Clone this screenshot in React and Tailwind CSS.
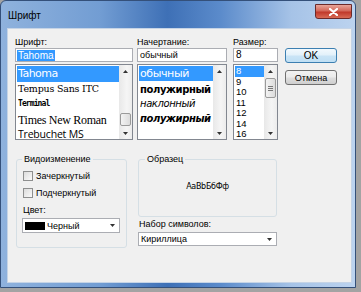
import React from "react";

const ui = "font-['Liberation_Sans',Arial,sans-serif] text-[9px] leading-[12px] text-black";

const Arrow = ({ down }) => (
  <svg width="5" height="3" viewBox="0 0 5 3" className="block">
    {down ? <path d="M0 0h5L2.5 3z" fill="#333" /> : <path d="M0 3h5L2.5 0z" fill="#333" />}
  </svg>
);

// vertical scrollbar; thumb placement comes in as full class strings
const ScrollBar = ({ thumb, grip }) => (
  <div className="flex w-[13px] shrink-0 flex-col items-center bg-[linear-gradient(90deg,#e8e8e8,#f5f5f5_60%,#ececec)]">
    <div className="flex h-[12px] items-center justify-center">
      <Arrow />
    </div>
    {thumb && (
      <div
        className={`${thumb} flex w-[11px] flex-col items-center justify-center gap-[1px] rounded-[2px] border border-[#9a9a9a] bg-[linear-gradient(90deg,#f3f3f3,#dcdcdc)]`}
      >
        {grip && (
          <>
            <div className="h-px w-[5px] bg-[#777]" />
            <div className="h-px w-[5px] bg-[#777]" />
            <div className="h-px w-[5px] bg-[#777]" />
          </>
        )}
      </div>
    )}
    <div className="mt-auto flex h-[12px] items-center justify-center">
      <Arrow down />
    </div>
  </div>
);

const Check = ({ label }) => (
  <div className="flex h-[12px] items-center gap-[3px]">
    <div className="h-[10px] w-[10px] border border-[#8e8f8f] bg-[linear-gradient(135deg,#dcdcdc,#fafafa)]" />
    <span>{label}</span>
  </div>
);

const fontItems = [
  { name: "Tempus Sans ITC", cls: "h-[14px] font-['DejaVu_Serif',serif] text-[9.5px] tracking-[-0.2px]" },
  { name: "Terminal", cls: "h-[15px] font-['DejaVu_Sans_Mono',monospace] text-[8px] font-bold tracking-[-0.9px]" },
  { name: "Times New Roman", cls: "h-[17px] font-['Liberation_Serif',serif] text-[12px] tracking-[-0.3px]" },
  { name: "Trebuchet MS", cls: "h-[12px] font-['Open_Sans',sans-serif] text-[10.5px] leading-[10px] tracking-[-0.2px]" },
];

const sizes = ["9", "10", "11", "12", "14", "16"];

export default function App() {
  return (
    <div className={`h-[292px] w-[361px] overflow-hidden bg-[#a3a3a3] ${ui}`}>
      <div className="flex h-[288px] w-[356px] flex-col rounded-t-[6px] border border-[#34507a] bg-[linear-gradient(90deg,#8fb2dd_0%,#729dd3_28%,#3e70b6_47%,#5b8bcb_62%,#a6c3e7_82%,#bcd3ef_100%)] pb-[4px] pl-[6px] pr-[3px]">
        {/* title bar */}
        <div className="flex h-[27px] shrink-0 items-start">
          <span className="mt-[9px] pl-[1px] text-[10px] leading-[12px]">Шрифт</span>
          <div className="ml-auto mt-[3px] flex h-[15px] w-[37px] items-center justify-center rounded-b-[3px] border border-[#6b2a2a] bg-[linear-gradient(180deg,#e8a59a_0%,#d3685a_45%,#c0392b_55%,#d86a55_100%)]">
            <svg width="9" height="8" viewBox="0 0 9 8">
              <path d="M1 1l7 6M8 1L1 7" stroke="#fff" strokeWidth="2.2" strokeLinecap="round" />
            </svg>
          </div>
        </div>

        {/* client area */}
        <div className="flex flex-1 flex-col border border-[#c6d4e6] bg-[#f0f0f0]">
          <div className="ml-[7px] mt-[7px] flex">
            {/* font */}
            <div className="flex w-[118px] flex-col">
              <div className="h-[12px]">Шрифт:</div>
              <div className="flex h-[14px] items-center border border-[#abadb3] bg-white pl-[1px]">
                <span className="bg-[#3399ff] px-[1px] text-[10px] leading-[11px] text-white">Tahoma</span>
              </div>
              <div className="mt-[2px] flex h-[76px] border border-[#828790] bg-white">
                <div className="flex flex-1 flex-col overflow-hidden pl-[1px] pt-[1px] leading-[12px]">
                  <div className="flex h-[16px] shrink-0 items-center bg-[#3399ff] pl-[1px] font-['DejaVu_Sans',sans-serif] text-[11px] tracking-[-0.5px] text-white">
                    Tahoma
                  </div>
                  {fontItems.map((f) => (
                    <div key={f.name} className={`flex shrink-0 items-center whitespace-nowrap pl-[1px] ${f.cls}`}>
                      {f.name}
                    </div>
                  ))}
                </div>
                <ScrollBar thumb="mt-[36px] h-[13px]" />
              </div>
            </div>

            {/* style */}
            <div className="ml-[4px] flex w-[90px] flex-col">
              <div className="h-[12px]">Начертание:</div>
              <div className="flex h-[14px] items-center border border-[#abadb3] bg-white pl-[2px]">обычный</div>
              <div className="mt-[2px] flex h-[76px] border border-[#828790] bg-white">
                <div className="flex flex-1 flex-col overflow-hidden whitespace-nowrap pl-[1px] pt-[1px] font-['DejaVu_Sans',sans-serif] text-[10px] leading-[12px] tracking-[-0.4px]">
                  <div className="flex h-[15px] shrink-0 items-center bg-[#3399ff] pl-[1px] text-[11px] text-white">обычный</div>
                  <div className="flex h-[17px] shrink-0 items-center pl-[1px] font-bold">полужирный</div>
                  <div className="flex h-[12px] shrink-0 items-center pl-[1px] italic">наклонный</div>
                  <div className="flex h-[17px] shrink-0 items-center pl-[1px] font-bold italic">полужирный</div>
                </div>
                <ScrollBar />
              </div>
            </div>

            {/* size */}
            <div className="ml-[6px] flex w-[45px] flex-col">
              <div className="h-[12px]">Размер:</div>
              <div className="flex h-[14px] items-center border border-[#abadb3] bg-white pl-[2px] text-[10px]">8</div>
              <div className="mt-[2px] flex h-[76px] border border-[#828790] bg-white">
                <div className="flex flex-1 flex-col overflow-hidden pl-[1px] pt-[1px] text-[9.5px] leading-[10px]">
                  <div className="flex h-[10.5px] shrink-0 items-center bg-[#3399ff] pl-[1px] text-white">8</div>
                  {sizes.map((s) => (
                    <div key={s} className="flex h-[10.5px] shrink-0 items-center pl-[1px]">
                      {s}
                    </div>
                  ))}
                </div>
                <ScrollBar thumb="mt-[1px] h-[20px]" grip />
              </div>
            </div>

            {/* buttons */}
            <div className="ml-[7px] flex w-[52px] flex-col pt-[12px]">
              <div className="flex h-[15px] items-center justify-center rounded-[3px] border border-[#3c7fb1] bg-[linear-gradient(180deg,#f2f9fd_0%,#e3f1fa_45%,#c9e4f6_55%,#bfdff4_100%)] text-[10px]">
                OK
              </div>
              <div className="mt-[7px] flex h-[15px] items-center justify-center rounded-[3px] border border-[#707070] bg-[linear-gradient(180deg,#f2f2f2_0%,#ebebeb_45%,#dddddd_55%,#cfcfcf_100%)]">
                Отмена
              </div>
            </div>
          </div>

          {/* lower part */}
          <div className="ml-[8px] mt-[13px] flex items-start">
            <fieldset className="w-[111px] rounded-[3px] border border-[#d5dfe5] pb-[14px]">
              <legend className="ml-[5px] px-[2px]">Видоизменение</legend>
              <div className="flex flex-col pl-[6px]">
                <div className="mt-[5px]">
                  <Check label="Зачеркнутый" />
                </div>
                <div className="mt-[5px]">
                  <Check label="Подчеркнутый" />
                </div>
                <div className="mt-[5px] h-[12px]">Цвет:</div>
                <div className="-ml-[1px] mt-[2px] flex h-[15px] w-[98px] items-center border border-[#abadb3] bg-white pl-[2px] pr-[4px]">
                  <div className="h-[8px] w-[20px] bg-black" />
                  <span className="ml-[2px]">Черный</span>
                  <div className="ml-auto">
                    <Arrow down />
                  </div>
                </div>
              </div>
            </fieldset>

            <div className="ml-[11px] flex w-[139px] flex-col">
              <fieldset className="rounded-[3px] border border-[#d5dfe5] pb-[7px]">
                <legend className="ml-[6px] px-[2px]">Образец</legend>
                <div className="flex h-[44px] items-center justify-center font-['DejaVu_Sans',sans-serif] text-[8px] tracking-[-0.3px]">
                  AaBbБбФф
                </div>
              </fieldset>
              <div className="mt-[1px] h-[12px] pl-[1px]">Набор символов:</div>
              <div className="mt-[2px] flex h-[14px] items-center border border-[#abadb3] bg-white pl-[2px] pr-[4px]">
                <span>Кириллица</span>
                <div className="ml-auto">
                  <Arrow down />
                </div>
              </div>
            </div>
          </div>
        </div>
      </div>
    </div>
  );
}
